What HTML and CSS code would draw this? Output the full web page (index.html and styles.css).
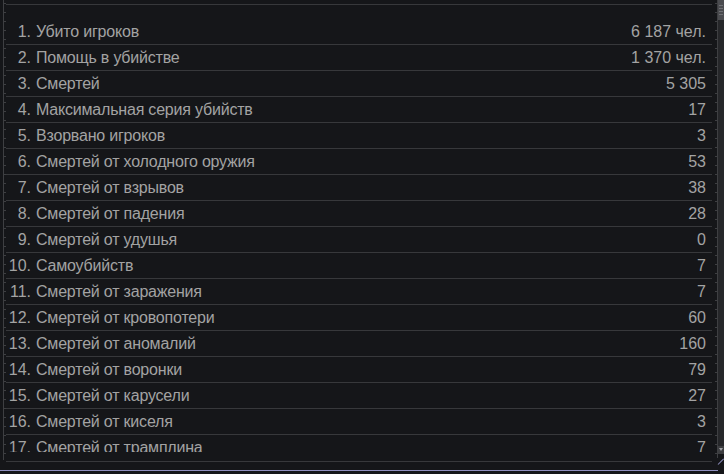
FILE: index.html
```html
<!DOCTYPE html>
<html lang="ru">
<head>
<meta charset="utf-8">
<title>Статистика</title>
<link rel="stylesheet" href="styles.css">
</head>
<body>
<div class="screen">
  <div class="frame">
    <div class="ruler ruler-left"></div>
    <div class="panel">
      <div class="viewport">
        <ol class="stats">
          <li><span class="name">Убито игроков</span><span class="val">6 187 чел.</span></li>
          <li><span class="name">Помощь в убийстве</span><span class="val">1 370 чел.</span></li>
          <li><span class="name">Смертей</span><span class="val">5 305</span></li>
          <li><span class="name">Максимальная серия убийств</span><span class="val">17</span></li>
          <li><span class="name">Взорвано игроков</span><span class="val">3</span></li>
          <li><span class="name">Смертей от холодного оружия</span><span class="val">53</span></li>
          <li><span class="name">Смертей от взрывов</span><span class="val">38</span></li>
          <li><span class="name">Смертей от падения</span><span class="val">28</span></li>
          <li><span class="name">Смертей от удушья</span><span class="val">0</span></li>
          <li><span class="name">Самоубийств</span><span class="val">7</span></li>
          <li><span class="name">Смертей от заражения</span><span class="val">7</span></li>
          <li><span class="name">Смертей от кровопотери</span><span class="val">60</span></li>
          <li><span class="name">Смертей от аномалий</span><span class="val">160</span></li>
          <li><span class="name">Смертей от воронки</span><span class="val">79</span></li>
          <li><span class="name">Смертей от карусели</span><span class="val">27</span></li>
          <li><span class="name">Смертей от киселя</span><span class="val">3</span></li>
          <li><span class="name">Смертей от трамплина</span><span class="val">7</span></li>
          <li><span class="name">Смертей от электры</span><span class="val">4</span></li>
        </ol>
      </div>
    </div>
    <div class="ruler ruler-right"></div>
    <div class="scrollbar">
      <div class="thumb"><i></i><i></i><i></i><i></i></div>
      <div class="track"></div>
      <div class="arrow"></div>
    </div>
  </div>
  <div class="footer">
    <div class="accent"></div>
  </div>
</div>
</body>
</html>
```

FILE: styles.css
```css
html, body {
  margin: 0;
  padding: 0;
  background: #151619;
}

.screen {
  width: 724px;
  height: 474px;
  overflow: hidden;
  display: flex;
  flex-direction: column;
  font-family: "Liberation Sans", Arial, sans-serif;
  font-size: 16px;
  color: #a3a3a3;
}

.frame {
  display: flex;
  height: 466px;
}

.ruler {
  flex: none;
  width: 6px;
}

.ruler-left {
  height: 460px;
  background:
    linear-gradient(#3e3f42, #3e3f42) 3px 0 / 1px 100% no-repeat,
    repeating-linear-gradient(to bottom, transparent 0 3px, #3e3f42 3px 4px, transparent 4px 9px) 4px 0 / 2px 100% no-repeat;
}

.ruler-right {
  height: 458px;
  background:
    linear-gradient(#3e3f42, #3e3f42) 5px 0 / 1px 100% no-repeat,
    repeating-linear-gradient(to bottom, transparent 0 3px, #3e3f42 3px 4px, transparent 4px 9px) 3px 0 / 2px 100% no-repeat;
}

.panel {
  flex: 1;
  margin-top: 4px;
  height: 458px;
  border-top: 1px solid #37383b;
  border-bottom: 1px solid #37383b;
  box-sizing: border-box;
}

.viewport {
  height: 447px;
  overflow: hidden;
}

.stats {
  margin: 0;
  padding: 14px 0 0 0;
  list-style: none;
  counter-reset: row;
}

.stats li {
  counter-increment: row;
  height: 25px;
  border-bottom: 1px solid #37383b;
  display: flex;
  align-items: center;
  padding-right: 6px;
}

.stats li::before {
  content: counter(row) ".";
  flex: none;
  width: 25px;
  padding-right: 5px;
  text-align: right;
}

.stats .name {
  flex: 1;
  white-space: nowrap;
  letter-spacing: -0.2px;
}

.stats .val {
  flex: none;
  white-space: nowrap;
}

.scrollbar {
  flex: none;
  width: 6px;
  height: 454px;
  background: #26272a;
  display: flex;
  flex-direction: column;
}

.thumb {
  height: 20px;
  background: #4b4c50;
  display: flex;
  flex-direction: column;
  justify-content: center;
  gap: 2px;
  padding: 0 1px;
  box-sizing: border-box;
}

.thumb i {
  display: block;
  height: 1px;
  background: #6f7074;
}

.track {
  flex: 1;
}

.arrow {
  height: 8px;
  background: #3c3d40;
  position: relative;
}

.arrow::after {
  content: "";
  position: absolute;
  left: 1px;
  top: 2px;
  border-left: 2px solid transparent;
  border-right: 2px solid transparent;
  border-top: 3px solid #a0a1a5;
}

.footer {
  height: 8px;
  position: relative;
}

.accent {
  position: absolute;
  left: 0;
  right: 6px;
  top: 4px;
  height: 1px;
  background: #8f8fbf;
}

.footer::after {
  content: "";
  position: absolute;
  top: -2px;
  right: -2px;
  width: 8px;
  height: 1px;
  background: #8f8fbf;
  transform: rotate(-45deg);
  transform-origin: left center;
}
```
